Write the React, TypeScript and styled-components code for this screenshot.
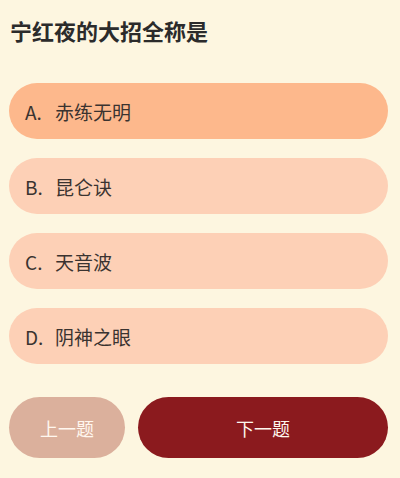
import React from 'react';
import styled, { createGlobalStyle } from 'styled-components';

const GlobalStyle = createGlobalStyle`
  html, body {
    margin: 0;
    padding: 0;
    background: #fdf6e0;
  }
  body {
    font-family: "Noto Sans CJK SC", "Liberation Sans", sans-serif;
  }
`;

const options = [
  { key: 'A', text: '赤练无明' },
  { key: 'B', text: '昆仑诀' },
  { key: 'C', text: '天音波' },
  { key: 'D', text: '阴神之眼' },
];

const App: React.FC = () => {
  const selected = 'A';
  return (
    <Page>
      <GlobalStyle />
      <Title>宁红夜的大招全称是</Title>
      <OptionList>
        {options.map((opt) => (
          <Option key={opt.key} $active={opt.key === selected}>
            <Letter>{opt.key}.</Letter>
            <span>{opt.text}</span>
          </Option>
        ))}
      </OptionList>
      <Footer>
        <PrevButton>上一题</PrevButton>
        <NextButton>下一题</NextButton>
      </Footer>
    </Page>
  );
};

const Page = styled.div`
  width: 400px;
  height: 478px;
  box-sizing: border-box;
  padding: 15px 12px 0 9px;
  background: #fdf6e0;
`;

const Title = styled.h1`
  margin: 0 0 0 1px;
  font-size: 22px;
  line-height: 30px;
  font-weight: bold;
  color: #2b2b2b;
`;

const OptionList = styled.div`
  display: flex;
  flex-direction: column;
  gap: 19px;
  margin-top: 38px;
`;

const Option = styled.div<{ $active: boolean }>`
  display: flex;
  align-items: center;
  height: 56px;
  padding-left: 16px;
  border-radius: 28px;
  background: ${(p) => (p.$active ? '#fdb88c' : '#fdd0b6')};
  color: #3a3330;
  font-size: 19px;
  line-height: 1;
`;

const Letter = styled.span`
  width: 30px;
`;

const Footer = styled.div`
  display: flex;
  gap: 13px;
  margin-top: 33px;
`;

const BaseButton = styled.button`
  height: 61px;
  border: none;
  border-radius: 31px;
  font-family: "Noto Sans CJK SC", "Liberation Sans", sans-serif;
  font-size: 18px;
  color: #fff7ef;
  cursor: pointer;
`;

const PrevButton = styled(BaseButton)`
  width: 116px;
  background: #dbb09c;
`;

const NextButton = styled(BaseButton)`
  flex: 1;
  background: #8b1a1e;
`;

export default App;
